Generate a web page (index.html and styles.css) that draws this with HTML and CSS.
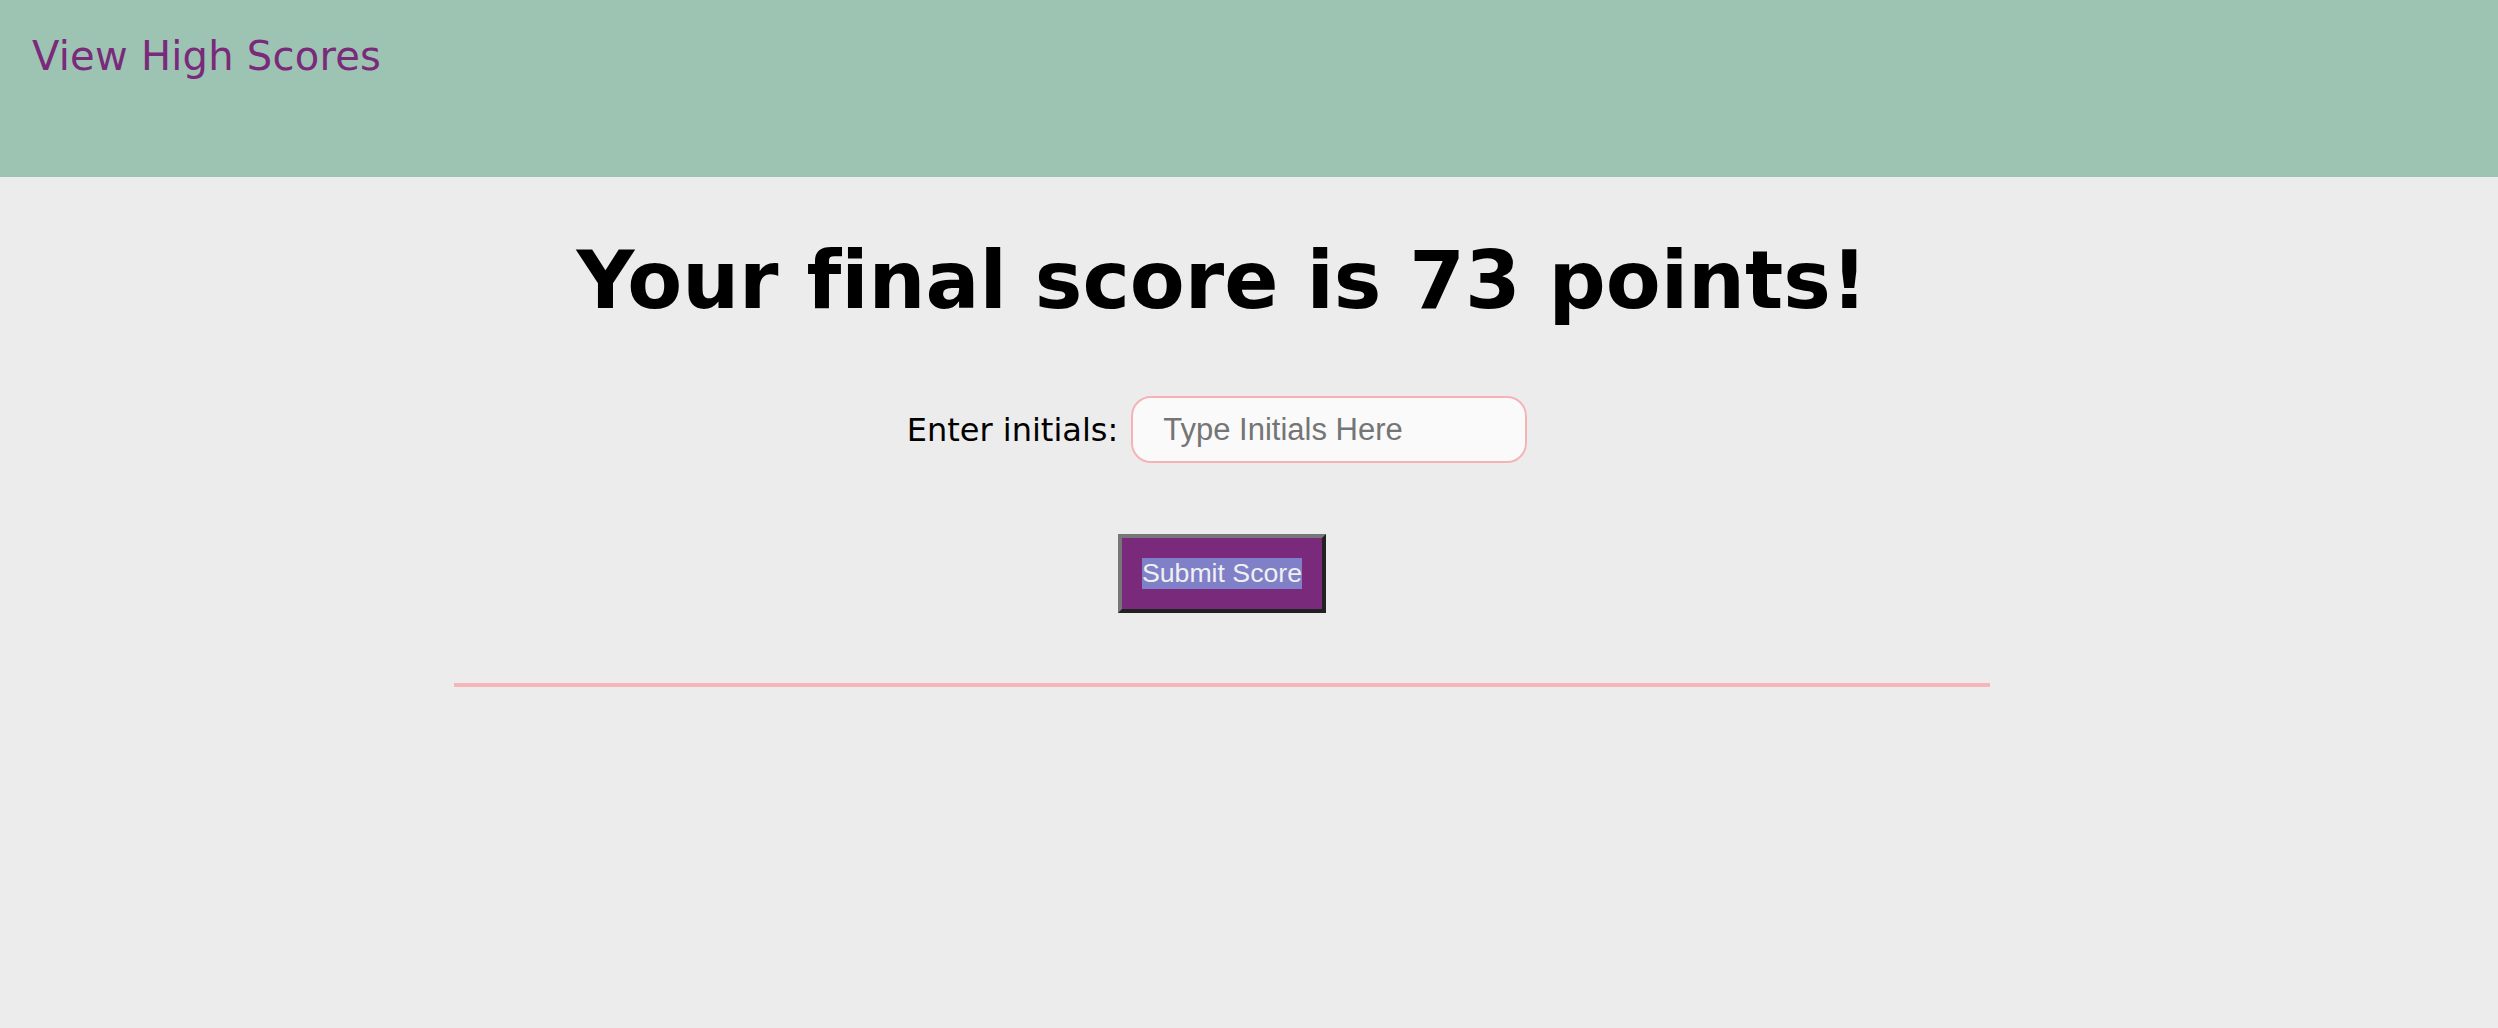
FILE: index.html
```html
<!DOCTYPE html>
<html lang="en">
<head>
<meta charset="utf-8">
<title>Quiz</title>
<link rel="stylesheet" href="styles.css">
</head>
<body>
<header class="topbar">
  <a class="scores-link" href="#">View High Scores</a>
</header>
<main class="content">
  <h1 class="final">Your final score is 73 points!</h1>
  <div class="initials-row">
    <label class="initials-label" for="initials">Enter initials:</label>
    <input class="initials-input" id="initials" type="text" placeholder="Type Initials Here">
  </div>
  <button class="submit" type="button"><span class="sel">Submit Score</span></button>
  <div class="rule"></div>
</main>
</body>
</html>
```

FILE: styles.css
```css
html, body {
  margin: 0;
  padding: 0;
}
body {
  background: #ececec;
  font-family: "DejaVu Sans", Verdana, sans-serif;
  font-variant-ligatures: none;
  min-height: 1028px;
}
.topbar {
  background: #9dc4b2;
  height: 177px;
  box-sizing: border-box;
  padding: 33px 0 0 32px;
}
.scores-link {
  font-size: 40px;
  letter-spacing: 0.25px;
  line-height: normal;
  color: #7a2a7a;
  text-decoration: none;
}
.content {
  width: 2444px;
  display: flex;
  flex-direction: column;
  align-items: center;
}
.final {
  margin: 57px 0 0 0;
  font-size: 80px;
  font-weight: bold;
  line-height: normal;
  color: #000;
  font-variant-ligatures: none;
}
.initials-row {
  margin-top: 69px;
  margin-right: 10px;
  display: flex;
  align-items: center;
  gap: 13px;
}
.initials-label {
  font-size: 32px;
  color: #000;
}
.initials-input {
  width: 396px;
  height: 67px;
  box-sizing: border-box;
  border: 2px solid #f5b3b8;
  border-radius: 20px;
  background: #fafafa;
  padding: 0 0 0 30px;
  font-family: "Liberation Sans", Arial, sans-serif;
  font-size: 31px;
  color: #333;
  outline: none;
}
.initials-input::placeholder {
  color: #757575;
}
.submit {
  margin-top: 71px;
  background: #7a2a7a;
  border: 4px solid;
  border-color: #777777 #222222 #222222 #777777;
  padding: 20px;
  font-family: "Liberation Sans", Arial, sans-serif;
  font-size: 26.67px;
  line-height: 31px;
  color: #eeeeee;
  cursor: pointer;
}
.sel {
  display: inline-block;
  background: #7f80c8;
  color: #f0f0f0;
  line-height: 31px;
  vertical-align: top;
}
.rule {
  margin-top: 70px;
  width: 1536px;
  height: 4px;
  background: #f5b5b9;
}
```
